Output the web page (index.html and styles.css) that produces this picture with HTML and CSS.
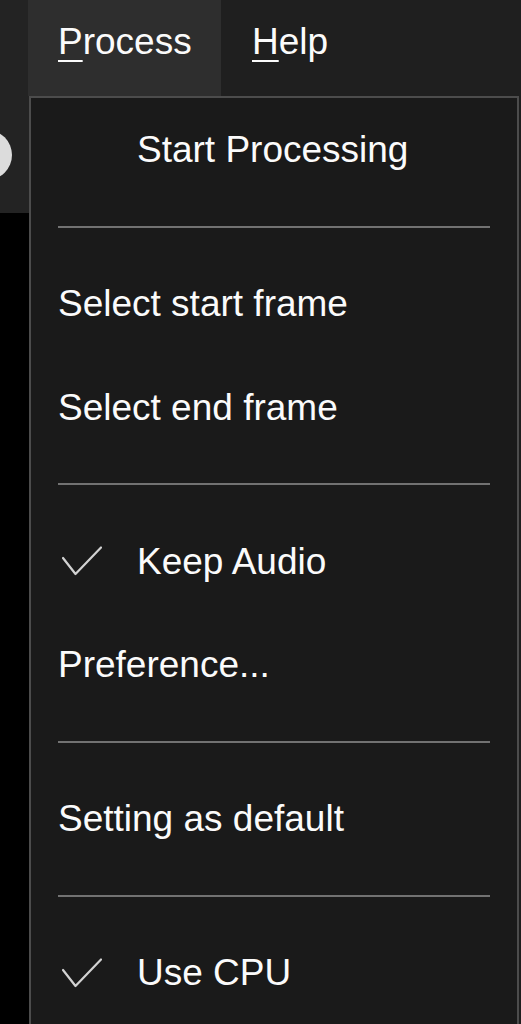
FILE: index.html
```html
<!DOCTYPE html>
<html lang="en">
<head>
<meta charset="utf-8">
<title>Process menu</title>
<link rel="stylesheet" href="styles.css">
</head>
<body>
<div class="app">
  <nav class="menubar">
    <div class="menubar-lead"></div>
    <div class="menu-title is-open"><u>P</u>rocess</div>
    <div class="menu-title"><u>H</u>elp</div>
  </nav>
  <div class="workspace">
    <aside class="sidebar">
      <div class="sidebar-top"><div class="knob"></div></div>
      <div class="sidebar-rest"></div>
    </aside>
    <main class="canvas"></main>
  </div>

  <div class="dropdown">
    <div class="item"><span class="mark"></span><span class="label">Start Processing</span></div>
    <div class="sep"></div>
    <div class="item"><span class="label">Select start frame</span></div>
    <div class="item"><span class="label">Select end frame</span></div>
    <div class="sep"></div>
    <div class="item"><span class="mark"><svg class="check" viewBox="0 0 40 30" width="40" height="30"><path d="M1 12 L13.5 28 L39 1.5"/></svg></span><span class="label">Keep Audio</span></div>
    <div class="item"><span class="label">Preference...</span></div>
    <div class="sep"></div>
    <div class="item"><span class="label">Setting as default</span></div>
    <div class="sep"></div>
    <div class="item"><span class="mark"><svg class="check" viewBox="0 0 40 30" width="40" height="30"><path d="M1 12 L13.5 28 L39 1.5"/></svg></span><span class="label">Use CPU</span></div>
  </div>
</div>
</body>
</html>
```

FILE: styles.css
```css
html, body {
  margin: 0;
  padding: 0;
  width: 521px;
  height: 1024px;
  overflow: hidden;
  background: #000;
}

.app {
  position: relative;
  width: 521px;
  height: 1024px;
  overflow: hidden;
  display: flex;
  flex-direction: column;
  font-family: "Liberation Sans", Arial, sans-serif;
  font-size: 37px;
  color: #fbfbfb;
}

.menubar {
  display: flex;
  height: 96px;
  background: #1f1f1f;
  flex: none;
}

.menubar-lead {
  width: 28px;
  background: #232323;
}

.menu-title {
  line-height: 84px;
  padding-left: 31px;
  white-space: nowrap;
}

.menu-title.is-open {
  width: 193px;
  box-sizing: border-box;
  padding-left: 30px;
  background: #2e2e2e;
}

.menu-title u {
  text-decoration-thickness: 2px;
  text-underline-offset: 6px;
}

.workspace {
  flex: 1;
  display: flex;
}

.sidebar {
  width: 29px;
  display: flex;
  flex-direction: column;
}

.sidebar-top {
  height: 117px;
  background: #232323;
  display: flex;
  align-items: center;
  overflow: hidden;
}

.knob {
  width: 50px;
  height: 50px;
  flex: none;
  margin-left: -38px;
  border-radius: 50%;
  background: #dcdcdc;
}

.sidebar-rest {
  flex: 1;
  background: #000;
}

.canvas {
  flex: 1;
  background: #1e1e1e;
}

.dropdown {
  position: absolute;
  top: 96px;
  bottom: 0;
  left: 29px;
  width: 490px;
  box-sizing: border-box;
  border: 2px solid #4c4c4c;
  border-bottom: none;
  background: #1a1a1a;
  overflow: hidden;
}

.item {
  display: flex;
  height: 103.5px;
  line-height: 103.5px;
  padding-left: 27px;
  white-space: nowrap;
}

.mark {
  width: 79px;
  flex: none;
}

.check {
  display: block;
  margin-top: 36.5px;
  margin-left: 4px;
  fill: none;
  stroke: #d2d2d2;
  stroke-width: 2.2;
  stroke-linecap: round;
  stroke-linejoin: round;
}

.sep {
  height: 2px;
  margin: 24.25px 27px;
  background: #727272;
}
```
